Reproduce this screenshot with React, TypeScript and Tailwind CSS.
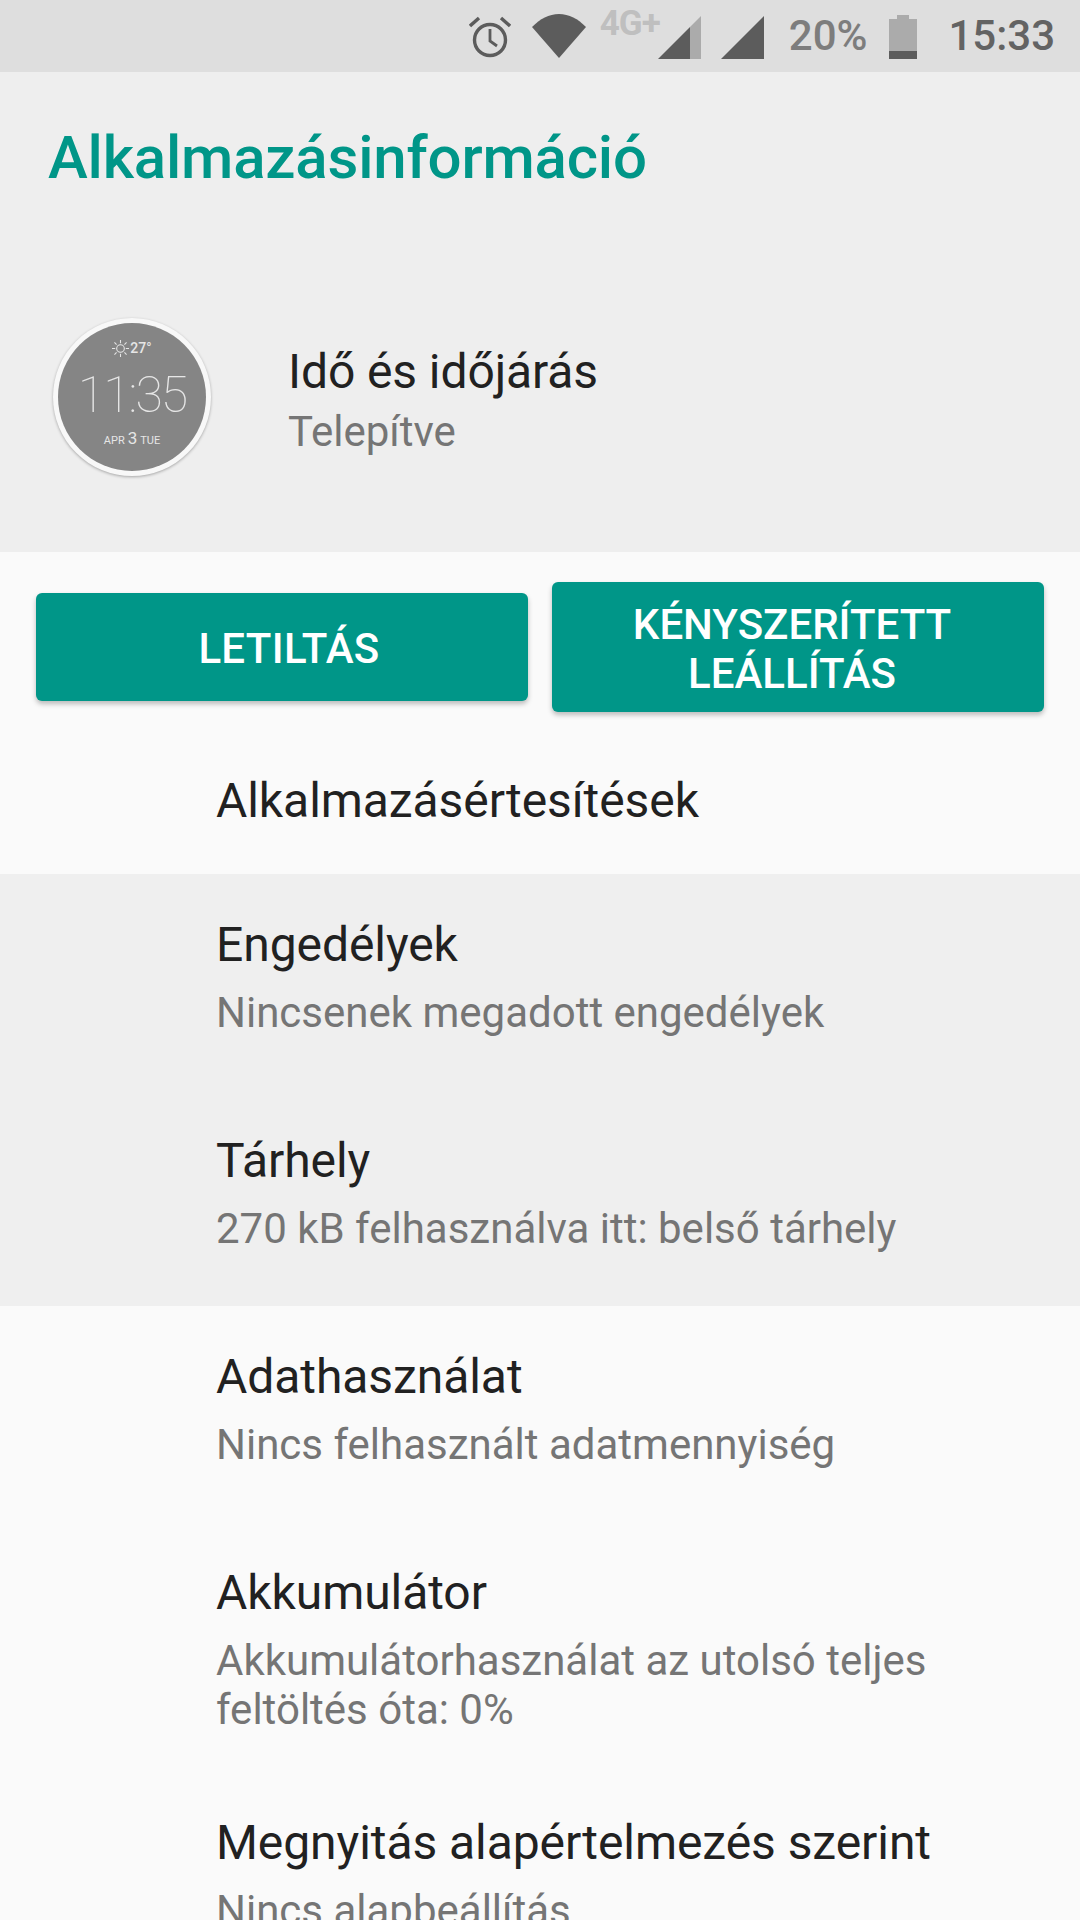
import React from 'react';

const roboto = "font-['Roboto',sans-serif]";

function StatusBar() {
  return (
    <div className="flex h-[72px] shrink-0 items-center justify-end bg-[#dedede] pr-[25px]">
      {/* alarm */}
      <svg width="42" height="42" viewBox="0 0 42 42" fill="none" stroke="#5c5c5c" strokeWidth="3.4" className="mt-[1px]">
        <circle cx="21" cy="24" r="15.5" />
        <path d="M21 13v12l7 5" strokeWidth="2.8" />
        <path d="M1 10l9-8M41 10l-9-8" />
      </svg>
      {/* wifi */}
      <svg width="54" height="44" viewBox="0 0 54 44" className="ml-[21px]">
        <path d="M0 13C8 5 17 0 27 0s19 5 27 13L27 44z" fill="#5c5c5c" />
      </svg>
      <span className={`${roboto} ml-[14px] mb-[24px] text-[35px] leading-[36px] font-bold tracking-[-1px] text-[#bfbfbf]`}>4G+</span>
      {/* signal sim 1 */}
      <svg width="43" height="43" viewBox="0 0 43 43" className="-ml-[2px] mt-[3px]">
        <path d="M43 0v43H32V11z" fill="#ababab" />
        <path d="M32 11v32H0z" fill="#5c5c5c" />
      </svg>
      {/* signal sim 2 */}
      <svg width="43" height="43" viewBox="0 0 43 43" className="ml-[20px] mt-[3px]">
        <path d="M43 0v43H0z" fill="#5c5c5c" />
      </svg>
      <span className={`${roboto} ml-[25px] text-[42px] leading-[72px] font-medium text-[#7d7d7d]`}>20%</span>
      {/* battery */}
      <svg width="28" height="44" viewBox="0 0 28 44" className="ml-[22px] mt-[1px]">
        <path d="M0 4h8V0h12v4h8v36H0z" fill="#ababab" />
        <path d="M0 36h28v8H0z" fill="#5c5c5c" />
      </svg>
      <span className={`${roboto} ml-[31px] text-[42px] leading-[72px] font-medium text-[#636363]`}>15:33</span>
    </div>
  );
}

function AppIcon() {
  return (
    <div className="flex h-[158px] w-[158px] items-center justify-center rounded-full bg-[#f8f8f8] shadow-[0_1px_3px_rgba(0,0,0,0.3)]">
      <div className="flex h-[148px] w-[148px] flex-col items-center rounded-full bg-[#858585] text-[#e6e6e6]">
        <div className="mt-[17px] flex h-[16px] items-center gap-[1px]">
          <svg width="17" height="17" viewBox="0 0 16 16" fill="none" stroke="#e6e6e6" strokeWidth="1">
            <circle cx="8" cy="8" r="3.6" />
            <path d="M8 0v3M8 13v3M0 8h3M13 8h3M2.3 2.3l2 2M11.700 11.700l2 2M2.300 13.700l2-2M11.700 4.300l2-2" />
          </svg>
          <span className={`${roboto} text-[14px] leading-[16px] font-medium`}>27°</span>
        </div>
        <span className={`${roboto} mt-[14px] text-[50px] leading-[50px] font-thin tracking-[-2px]`}>11:35</span>
        <span className={`${roboto} mt-[10px] flex items-baseline gap-[3px] text-[11px] leading-[16px]`}>
          APR <span className="text-[17px]">3</span> TUE
        </span>
      </div>
    </div>
  );
}

function Row({ title, sub, grey }: { title: string; sub?: string; grey?: boolean }) {
  return (
    <div className={`flex min-h-[216px] shrink-0 flex-col pt-[39px] pb-[38px] pl-[216px] pr-[120px] ${roboto} ${grey ? 'bg-[#efefef]' : ''}`}>
      <div className="text-[48px] leading-[64px] tracking-[-0.07px] text-[#212121]">{title}</div>
      {sub && <div className="mt-[11px] text-[42px] leading-[49px] text-[#757575]">{sub}</div>}
    </div>
  );
}

function App() {
  return (
    <div className={`flex h-[1920px] w-[1080px] flex-col overflow-hidden bg-[#fafafa] ${roboto}`}>
      <StatusBar />

      {/* Header */}
      <div className="flex h-[480px] shrink-0 flex-col bg-[#eeeeee]">
        <h1 className="mt-[50px] pl-[48px] text-[60px] leading-[72px] font-medium tracking-[-0.18px] text-[#009688]">Alkalmazásinformáció</h1>
        <div className="mt-[124px] flex items-center pl-[53px]">
          <AppIcon />
          <div className="ml-[77px] pt-[5px]">
            <div className="text-[48px] leading-[64px] tracking-[-0.1px] text-[#212121]">Idő és időjárás</div>
            <div className="text-[42px] leading-[56px] text-[#757575]">Telepítve</div>
          </div>
        </div>
      </div>

      {/* Buttons */}
      <div className="flex shrink-0 items-center gap-[24px] px-[36px] pt-[30px] pb-[14px]">
        <button className="h-[108px] w-[492px] rounded-[6px] bg-[#009688] pt-[2px] text-[42px] leading-[49px] font-medium text-white shadow-[0_3px_5px_rgba(0,0,0,0.25)]">
          <span className="ml-[14px] block tracking-[0.3px]">LETILTÁS</span>
        </button>
        <button className="h-[130px] w-[492px] rounded-[6px] bg-[#009688] pt-[3px] text-[42px] leading-[49px] font-medium text-white shadow-[0_3px_5px_rgba(0,0,0,0.25)]">
          <span className="-ml-[12px] block">KÉNYSZERÍTETT<br />LEÁLLÍTÁS</span>
        </button>
      </div>

      <div className="flex h-[148px] shrink-0 items-center pt-[2px] pl-[216px] text-[48px] leading-[64px] tracking-[-0.07px] text-[#212121]">Alkalmazásértesítések</div>
      <Row grey title="Engedélyek" sub="Nincsenek megadott engedélyek" />
      <Row grey title="Tárhely" sub="270 kB felhasználva itt: belső tárhely" />
      <Row title="Adathasználat" sub="Nincs felhasznált adatmennyiség" />
      <Row title="Akkumulátor" sub="Akkumulátorhasználat az utolsó teljes feltöltés óta: 0%" />
      <Row title="Megnyitás alapértelmezés szerint" sub="Nincs alapbeállítás" />
    </div>
  );
}

export default App;
